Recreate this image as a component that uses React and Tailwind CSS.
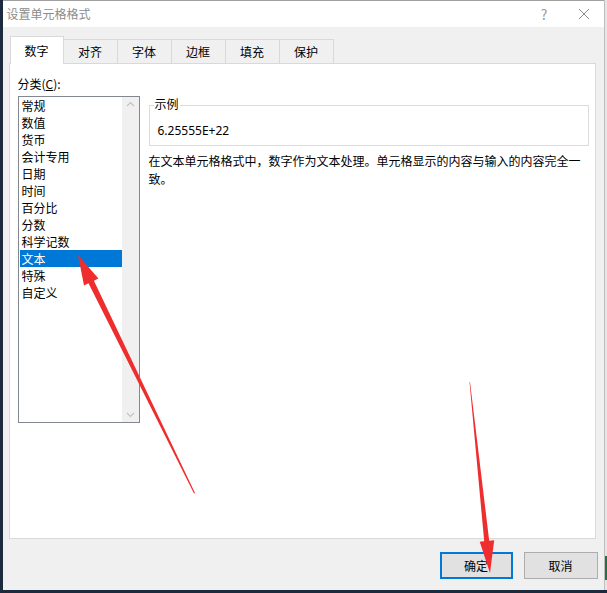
import React from "react";

const cats = ["常规","数值","货币","会计专用","日期","时间","百分比","分数","科学记数","文本","特殊","自定义"];
const tabs = ["数字","对齐","字体","边框","填充","保护"];

export default function App() {
  const font = { fontFamily: '"Noto Sans CJK SC", "Noto Sans", sans-serif' };
  return (
    <div className="relative w-[607px] h-[593px] flex flex-col bg-[#1c2636] overflow-hidden text-[12px] text-black" style={font}>
      <div className="flex flex-1 min-h-0">
        <div className="w-[3px] bg-[#1c2a3e]" />
        <div className="flex-1 flex flex-col bg-[#f0f0f0] border-t border-[#a0a0a0]">
          {/* title bar */}
          <div className="h-[26px] bg-white flex items-center justify-between pl-[4px] pr-[14px]">
            <span className="text-[12px] text-[#8c8c8c]">设置单元格格式</span>
            <div className="flex items-center gap-[30px] text-[#9a9a9a]">
              <span className="text-[14px] leading-none">?</span>
              <svg width="12" height="12" viewBox="0 0 12 12"><path d="M1 1 L11 11 M11 1 L1 11" stroke="#8a8a8a" strokeWidth="1" fill="none"/></svg>
            </div>
          </div>
          {/* body */}
          <div className="flex-1 flex flex-col pl-[6px] pr-[8px] pt-[9px]">
            <div className="flex items-end h-[27px] pl-[1px]">
              {tabs.map((t, i) => (
                <div key={t}
                  className={i === 0
                    ? "relative z-10 w-[54px] h-[28px] -mb-[1px] bg-white border border-b-0 border-[#d9d9d9] flex items-center justify-center text-[12px]"
                    : "w-[54px] h-[24px] bg-[#f0f0f0] border border-l-0 border-b-0 border-[#d9d9d9] flex items-center justify-center text-[12px]"}>
                  {t}
                </div>
              ))}
            </div>
            <div className="h-[476px] bg-white border border-[#d9d9d9] flex pl-[8px] pt-[12px] pr-[6px]">
              <div className="w-[122px] flex flex-col">
                <div className="h-[20px] leading-[16px]">分类(<span className="underline">C</span>):</div>
                <div className="h-[327px] border border-[#828790] flex">
                  <div className="flex-1 pl-[1px]">
                    {cats.map((c) => (
                      <div key={c} className={c === "文本" ? "h-[17px] leading-[17px] pl-[2px] bg-[#0078d7] text-white" : "h-[17px] leading-[17px] pl-[2px]"}>{c}</div>
                    ))}
                  </div>
                  <div className="w-[17px] bg-[#f0f0f0] flex flex-col justify-between items-center py-[4px]">
                    <svg width="9" height="6" viewBox="0 0 9 6"><path d="M1 5 L4.5 1.5 L8 5" stroke="#c2c2c2" strokeWidth="1.2" fill="none"/></svg>
                    <svg width="9" height="6" viewBox="0 0 9 6"><path d="M1 1 L4.5 4.5 L8 1" stroke="#c2c2c2" strokeWidth="1.2" fill="none"/></svg>
                  </div>
                </div>
              </div>
              <div className="flex-1 ml-[9px] flex flex-col pt-[29px]">
                <div className="relative h-[41px] border border-[#dcdcdc]">
                  <span className="absolute -top-[10px] left-[4px] bg-white px-[1px] leading-[16px]">示例</span>
                  <div className="pt-[17px] pl-[8px] leading-[16px] text-[12px]" style={{fontFamily: '"Noto Sans", sans-serif'}}>6.25555E+22</div>
                </div>
                <div className="mt-[6px] leading-[18px] w-[440px]">在文本单元格格式中，数字作为文本处理。单元格显示的内容与输入的内容完全一致。</div>
              </div>
            </div>
            <div className="flex-1 flex items-start justify-end pt-[13px] gap-[11px] mr-[-2px]">
              <div className="w-[73px] h-[27px] border-2 border-[#0078d7] bg-[#e1e1e1] flex items-center justify-center">确定</div>
              <div className="w-[74px] h-[27px] border border-[#adadad] bg-[#e1e1e1] flex items-center justify-center">取消</div>
            </div>
          </div>
        </div>
        <div className="w-[4px] bg-[#e6e6e6] border-l border-[#bdbdbd] flex flex-col">
          <div className="flex-1" />
          <div className="h-[24px] bg-[#217346] mb-[10px]" />
        </div>
      </div>
      <div className="h-[3px] bg-[#1c2a3e]" />
      <svg className="absolute inset-0 pointer-events-none" width="607" height="593" viewBox="0 0 607 593">
        <polygon fill="#ee2e2e" points="195,493 93.9,280.7 98.4,278.5 78,255 84.0,285.5 88.5,283.3 194,493.5" />
        <polygon fill="#ee2e2e" points="470,382 489.2,540.7 494.2,540.3 490,573 479.7,541.7 484.2,541.3 469.5,382" />
      </svg>
    </div>
  );
}
